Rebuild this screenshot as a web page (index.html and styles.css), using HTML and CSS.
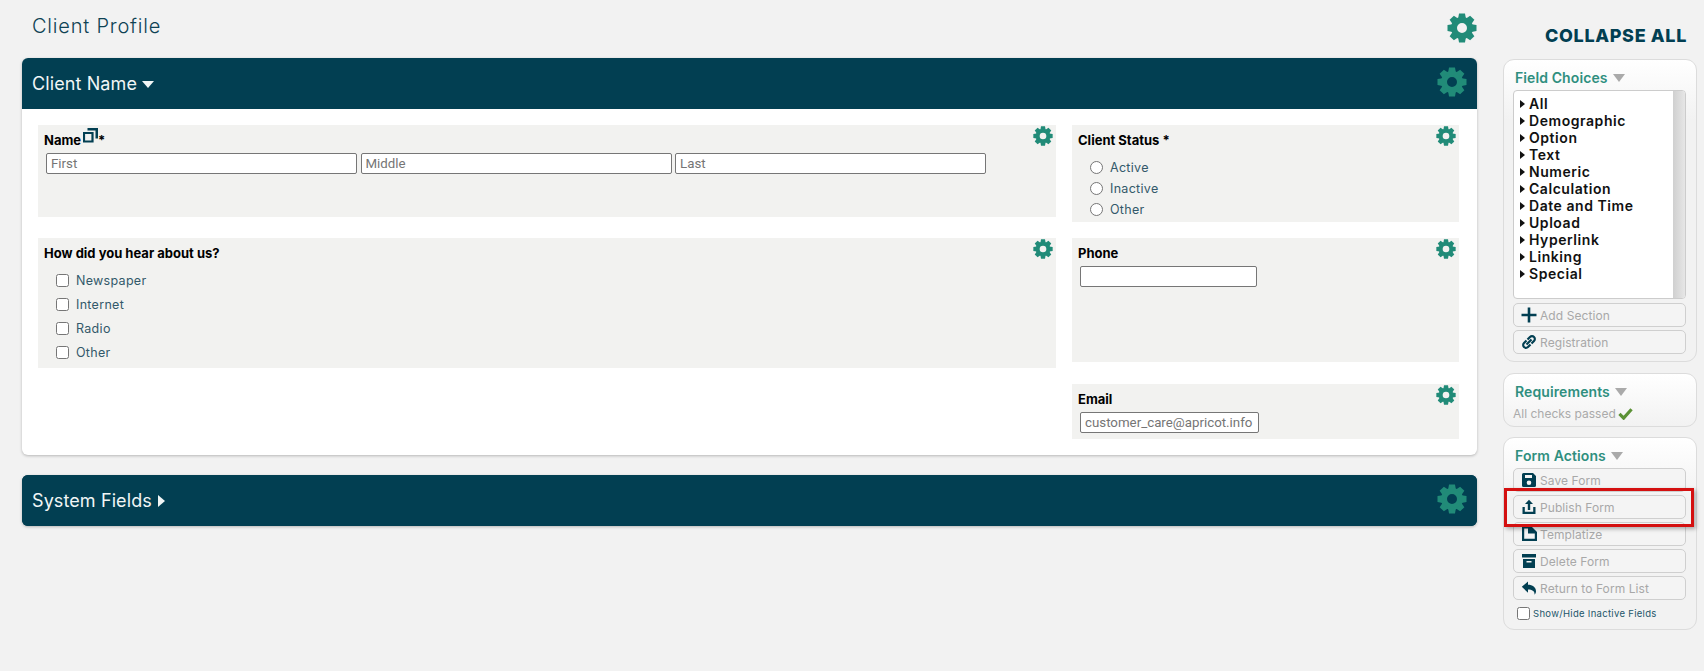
FILE: index.html
```html
<!DOCTYPE html>
<html lang="en">
<head>
<meta charset="utf-8">
<title>Client Profile</title>
<link rel="stylesheet" href="styles.css">
</head>
<body>
<svg class="defs" width="0" height="0" aria-hidden="true">
  <symbol id="gear" viewBox="0 0 24 24">
    <circle cx="12" cy="12" r="6.4" fill="none" stroke="currentColor" stroke-width="4.8"/>
    <g fill="currentColor">
      <path id="tooth" d="M9.6 .4h4.8l.7 4h-6.2z"/>
      <path d="M9.6 .4h4.8l.7 4h-6.2z" transform="rotate(45 12 12)"/>
      <path d="M9.6 .4h4.8l.7 4h-6.2z" transform="rotate(90 12 12)"/>
      <path d="M9.6 .4h4.8l.7 4h-6.2z" transform="rotate(135 12 12)"/>
      <path d="M9.6 .4h4.8l.7 4h-6.2z" transform="rotate(180 12 12)"/>
      <path d="M9.6 .4h4.8l.7 4h-6.2z" transform="rotate(225 12 12)"/>
      <path d="M9.6 .4h4.8l.7 4h-6.2z" transform="rotate(270 12 12)"/>
      <path d="M9.6 .4h4.8l.7 4h-6.2z" transform="rotate(315 12 12)"/>
    </g>
  </symbol>
</svg>
<div class="page">
  <main class="main">
    <div class="title-row">
      <h1 class="title">Client Profile</h1>
      <svg class="gear gear-lg"><use href="#gear"/></svg>
    </div>
    <section class="section">
      <header class="section-head head-open">
        <span class="section-name">Client Name</span><span class="caret-down"></span>
        <svg class="gear gear-lg gear-head"><use href="#gear"/></svg>
      </header>
      <div class="section-body">
        <div class="field field-name">
          <svg class="gear gear-sm"><use href="#gear"/></svg>
          <div class="label label-name">Name<svg class="copy-icon" viewBox="0 0 15 15"><path d="M4.500 0H15v10.500h-2.500V2.500h-8z" fill="#023f52"/><path d="M1 5h8.500v8.500H1z" fill="none" stroke="#023f52" stroke-width="2.200"/></svg><span class="star">*</span></div>
          <div class="name-inputs">
            <input class="input input-name" placeholder="First">
            <input class="input input-name" placeholder="Middle">
            <input class="input input-name" placeholder="Last">
          </div>
        </div>
        <div class="field field-status">
          <svg class="gear gear-sm"><use href="#gear"/></svg>
          <div class="label">Client Status *</div>
          <div class="radios">
            <label class="choice"><input type="radio" class="radio" name="st"><span>Active</span></label>
            <label class="choice"><input type="radio" class="radio" name="st"><span>Inactive</span></label>
            <label class="choice"><input type="radio" class="radio" name="st"><span>Other</span></label>
          </div>
        </div>
        <div class="field field-hear">
          <svg class="gear gear-sm"><use href="#gear"/></svg>
          <div class="label">How did you hear about us?</div>
          <div class="checks">
            <label class="choice"><input type="checkbox" class="check"><span>Newspaper</span></label>
            <label class="choice"><input type="checkbox" class="check"><span>Internet</span></label>
            <label class="choice"><input type="checkbox" class="check"><span>Radio</span></label>
            <label class="choice"><input type="checkbox" class="check"><span>Other</span></label>
          </div>
        </div>
        <div class="field field-phone">
          <svg class="gear gear-sm"><use href="#gear"/></svg>
          <div class="label">Phone</div>
          <input class="input input-phone">
        </div>
        <div class="field field-email">
          <svg class="gear gear-sm"><use href="#gear"/></svg>
          <div class="label">Email</div>
          <input class="input input-email" placeholder="customer_care@apricot.info">
        </div>
      </div>
    </section>
    <section class="section section-closed">
      <header class="section-head head-closed">
        <span class="section-name">System Fields</span><span class="caret-right"></span>
        <svg class="gear gear-lg gear-head"><use href="#gear"/></svg>
      </header>
    </section>
  </main>
  <aside class="side">
    <div class="collapse">COLLAPSE ALL</div>
    <div class="panel panel-fields">
      <div class="panel-title">Field Choices<span class="caret-gray"></span></div>
      <div class="listbox">
        <ul class="list">
          <li>All</li><li>Demographic</li><li>Option</li><li>Text</li><li>Numeric</li><li>Calculation</li><li>Date and Time</li><li>Upload</li><li>Hyperlink</li><li>Linking</li><li>Special</li>
        </ul>
        <div class="scrollbar"></div>
      </div>
      <div class="buttons">
        <div class="btn"><svg class="btn-icon" viewBox="0 0 16 16"><path d="M8 .5v15M.5 8h15" stroke="#023f52" stroke-width="2.600" fill="none"/></svg>Add Section</div>
        <div class="btn"><svg class="btn-icon" viewBox="0 0 16 16"><g fill="none" stroke="#023f52" stroke-width="2.200"><path d="M6.500 5.500 9 3a2.800 2.800 0 0 1 4 4l-2.500 2.500"/><path d="M9.500 10.500 7 13a2.800 2.800 0 0 1-4-4l2.500-2.500"/><path d="M5.500 10.500l5-5"/></g></svg>Registration</div>
      </div>
    </div>
    <div class="panel panel-req">
      <div class="panel-title">Requirements<span class="caret-gray"></span></div>
      <div class="passed">All checks passed<svg class="tick" viewBox="0 0 16 14"><path d="M1.500 7.500 6 12 14.500 2.500" fill="none" stroke="#5b9135" stroke-width="3.400"/></svg></div>
    </div>
    <div class="panel panel-actions">
      <div class="panel-title">Form Actions<span class="caret-gray"></span></div>
      <div class="buttons">
        <div class="btn"><svg class="btn-icon" viewBox="0 0 16 16"><path fill="#023f52" fill-rule="evenodd" d="M2.500 1H12l3 3v9.500a1.500 1.500 0 0 1-1.500 1.500h-11A1.500 1.500 0 0 1 1 13.500v-11A1.500 1.500 0 0 1 2.500 1zM4 3v3h7V3zM8 8.500a2.300 2.300 0 1 0 0 4.600 2.300 2.300 0 0 0 0-4.600z"/></svg>Save Form</div>
        <div class="btn"><svg class="btn-icon" viewBox="0 0 16 16"><path fill="#023f52" d="M8 .8 12 5H9.200v6H6.800V5H4zM1.500 8h2.300v4.700h8.400V8h2.300v7h-13z"/></svg>Publish Form</div>
        <div class="btn"><svg class="btn-icon" viewBox="0 0 16 16"><path fill="none" stroke="#023f52" stroke-width="2.200" d="M2.100 1.500h6v5h6.800v7.400H2.100z"/><path fill="#023f52" d="M9 1h2l4 4v1H9z"/></svg>Templatize</div>
        <div class="btn"><svg class="btn-icon" viewBox="0 0 16 16"><path fill="#023f52" fill-rule="evenodd" d="M1 1h14v3.500H1zM2 6h12v9H2zM5.500 8v1.500h5V8z"/></svg>Delete Form</div>
        <div class="btn"><svg class="btn-icon" viewBox="0 0 16 16"><path fill="#023f52" d="M7 1.500v3.300c4.500 0 8 2.500 8 6.500 0 1.500-.6 2.700-1.500 3.500.4-3.300-2-5.200-6.500-5.200v3.200L.8 6.800z"/></svg>Return to Form List</div>
      </div>
      <label class="show-hide"><input type="checkbox" class="check check-small"><span>Show/Hide Inactive Fields</span></label>
    </div>
    <div class="highlight"></div>
  </aside>
</div>
</body>
</html>
```
FILE: styles.css
```css
* { box-sizing: border-box; }
html, body { margin: 0; padding: 0; }
body {
  background: #f2f2f2;
  font-family: "Inter", "Liberation Sans", sans-serif;
  height: 671px;
  overflow: hidden;
}
.defs { position: absolute; }
.page { display: flex; align-items: flex-start; position: relative; }
.main { width: 1477px; padding-left: 22px; flex: none; }

.title-row { height: 58px; position: relative; padding: 14px 0 0 10px; }
.title {
  margin: 0;
  font-size: 20px;
  font-weight: 300;
  line-height: 24px;
  letter-spacing: .8px;
  color: #0e4254;
}
.gear { display: block; color: #218b78; position: absolute; }
.gear-lg { width: 30px; height: 30px; }
.title-row .gear-lg { right: 0; top: 13px; }
.gear-head { right: 10px; top: 9px; }
.gear-sm { width: 20px; height: 20px; right: 3px; top: 1px; }

.section { background: #fff; border-radius: 6px; box-shadow: 0 1px 3px rgba(0,0,0,.25); }
.section-closed { margin-top: 20px; background: #023f52; }
.section-head {
  height: 51px;
  background: #023f52;
  color: #f1f6f6;
  position: relative;
  display: flex;
  align-items: center;
  padding-left: 10px;
}
.head-open { border-radius: 6px 6px 0 0; }
.head-closed { border-radius: 6px; }
.section-name { font-size: 18px; font-weight: 400; letter-spacing: .1px; }
.caret-down {
  margin-left: 5px; margin-top: 2px;
  border-left: 6px solid transparent;
  border-right: 6px solid transparent;
  border-top: 7px solid #f1f6f6;
}
.caret-right {
  margin-left: 6px; margin-top: 1px;
  border-top: 6px solid transparent;
  border-bottom: 6px solid transparent;
  border-left: 7px solid #f1f6f6;
}

.section-body {
  display: grid;
  grid-template-columns: 1018px 387px;
  column-gap: 16px;
  row-gap: 16px;
  grid-template-rows: 97px 130px 55px;
  align-items: start;
  padding: 16px 18px 16px 16px;
}
.field { background: #f2f2f0; position: relative; padding: 9px 6px 0; }
.field-name { height: 92px; }
.field-status { height: 97px; }
.field-hear { height: 130px; }
.field-phone { height: 124px; }
.field-email { height: 55px; grid-column: 2; }

.label { font-size: 13px; font-weight: 700; color: #000; line-height: 13px; height: 13px; }
.label-name { display: flex; align-items: flex-end; }
.copy-icon { width: 15px; height: 15px; margin: 0 0 4px 2px; }
.star { align-self: flex-start; margin-top: 0; margin-left: 0; }

.input {
  display: block;
  height: 21px;
  border: 1px solid #767676;
  border-radius: 2px;
  background: #fff;
  font-family: "Roboto", "Liberation Sans", sans-serif;
  font-size: 13.300px;
  padding: 0 4px;
  margin: 0;
}
.input::placeholder { color: #757575; opacity: 1; }
.name-inputs { display: flex; gap: 3.500px; margin: 6px 0 0 2px; }
.input-name { width: 311px; }
.input-phone { width: 177px; margin: 6px 0 0 2px; }
.input-email { width: 179px; margin: 6px 0 0 2px; }

.choice { display: flex; align-items: center; font-size: 12.500px; letter-spacing: .3px; color: #33596a; }
.choice span { display: block; }
.radio, .check {
  appearance: none;
  margin: 0;
  width: 13px; height: 13px;
  background: #fff;
  border: 1px solid #767676;
  flex: none;
}
.radio { border-radius: 50%; }
.check { border-radius: 2.500px; }
.radios { margin: 10px 0 0 12px; display: flex; flex-direction: column; gap: 0; }
.radios .choice { height: 21px; gap: 7px; }
.checks { margin: 8px 0 0 12px; display: flex; flex-direction: column; }
.checks .choice { height: 24px; gap: 7px; }

.side { width: 194px; margin-left: 26px; flex: none; position: relative; }
.collapse {
  height: 59px;
  padding-top: 25px;
  padding-right: 10px;
  text-align: right;
  font-size: 18px;
  line-height: 21px;
  font-weight: 800;
  letter-spacing: .65px;
  color: #023f52;
  white-space: nowrap;
}
.panel {
  border: 1px solid #dcdcdc;
  border-radius: 11px;
  background: linear-gradient(#fff, #f2f2f2 60px);
  padding: 0 10px 0 9px;
}
.panel-fields { height: 303px; padding-top: 9px; }
.panel-req { height: 54px; margin-top: 11px; padding-top: 9px; background: linear-gradient(#fff, #f2f2f2); }
.panel-actions { height: 193px; margin-top: 10px; padding-top: 9px; }
.panel-title {
  font-size: 14px;
  line-height: 18px;
  font-weight: 600;
  letter-spacing: .1px;
  color: #2f8f7f;
  margin-left: 2px;
  display: flex;
  align-items: center;
}
.caret-gray {
  margin-left: 5px;
  border-left: 6px solid transparent;
  border-right: 6px solid transparent;
  border-top: 8px solid #aaa;
}
.listbox {
  margin-top: 3px;
  height: 209px;
  display: flex;
  border: 1px solid #ccc;
  border-radius: 4px;
  background: #fff;
  overflow: hidden;
}
.list { list-style: none; margin: 0; padding: 4px 0 0 6px; flex: 1; }
.list li {
  font-size: 14px;
  line-height: 17px;
  font-weight: 600;
  letter-spacing: .55px;
  color: #111;
  position: relative;
  padding-left: 9px;
}
.list li::before {
  content: "";
  position: absolute;
  left: 0; top: 5px;
  border-top: 4px solid transparent;
  border-bottom: 4px solid transparent;
  border-left: 5px solid #111;
}
.scrollbar { width: 12px; background: linear-gradient(90deg, #d0d0d0, #e6e6e6); }
.buttons { display: flex; flex-direction: column; gap: 3px; }
.panel-fields .buttons { margin-top: 4px; }
.panel-actions .buttons { margin-top: 3px; }
.btn {
  height: 24px;
  border: 1px solid #cfcfcf;
  border-radius: 5px;
  background: #f4f4f4;
  display: flex;
  align-items: center;
  padding-left: 7px;
  gap: 3px;
  font-size: 12px;
  letter-spacing: .08px;
  color: #a8a8a8;
}
.btn-icon { width: 16px; height: 16px; flex: none; }
.passed {
  font-size: 12px;
  letter-spacing: 0;
  color: #aaa;
  margin-top: 5px;
  display: flex;
  align-items: center;
  gap: 2px;
}
.tick { width: 15px; height: 13px; }
.show-hide {
  display: flex;
  align-items: center;
  gap: 3px;
  margin: 7px 0 0 4px;
  font-size: 9.500px;
  letter-spacing: .3px;
  color: #23566a;
}
.highlight {
  position: absolute;
  left: 1px; top: 488px;
  width: 190px; height: 39px;
  border: 3px solid #d41010;
  box-shadow: 2px 2px 4px rgba(0,0,0,.3);
}
```
